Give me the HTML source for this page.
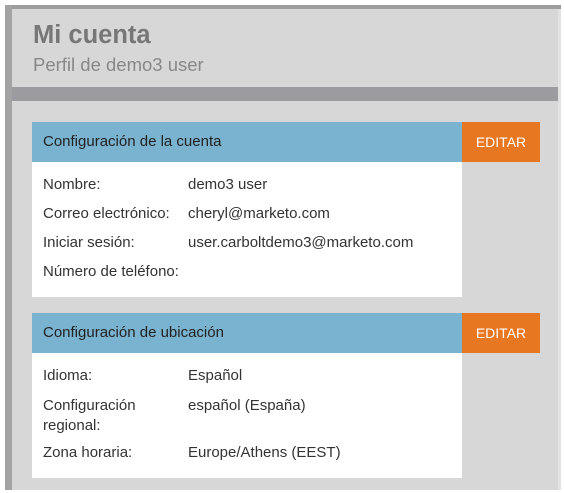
<!DOCTYPE html>
<html><head><meta charset="utf-8"><style>
*{margin:0;padding:0;box-sizing:border-box}
body{width:564px;height:493px;background:#fff;font-family:"Liberation Sans",sans-serif;position:relative;overflow:hidden}
.a{position:absolute}
.lbl,.val{position:absolute;font-size:15px;color:#333;line-height:18px}
.hd{position:absolute;left:32px;width:430px;height:40px;background:#7ab3cf;color:#222;font-size:15px;line-height:40px;padding-left:11px}
.ed{position:absolute;left:462px;width:78px;height:40px;background:#e87722;color:#fff;font-size:14px;line-height:40px;text-align:center}
.wb{position:absolute;left:32px;width:430px;background:#fff}
</style></head><body>
<div class="a" style="left:5px;top:5px;width:556px;height:485px;background:#d7d7d7"></div>
<div class="a" style="left:5px;top:5px;width:556px;height:4px;background:#9d9d9d"></div>
<div class="a" style="left:5px;top:5px;width:7px;height:485px;background:#a3a3a3"></div>
<div class="a" style="left:12px;top:87px;width:549px;height:14px;background:#9c9ba0"></div>
<div class="a" style="left:558px;top:9px;width:3px;height:481px;background:#e2e2e2"></div>
<div class="a" style="left:33px;top:21px;font-size:25.5px;font-weight:bold;color:#777">Mi cuenta</div>
<div class="a" style="left:33px;top:54px;font-size:18.5px;color:#888">Perfil de demo3 user</div>

<div class="hd" style="top:122px">Configuración de la cuenta</div>
<div class="ed" style="top:122px">EDITAR</div>
<div class="wb" style="top:162px;height:135px"></div>
<div class="lbl" style="left:43px;top:176px">Nombre:</div><div class="val" style="left:188px;top:176px">demo3 user</div>
<div class="lbl" style="left:43px;top:205px">Correo electrónico:</div><div class="val" style="left:188px;top:205px">cheryl@marketo.com</div>
<div class="lbl" style="left:43px;top:234px">Iniciar sesión:</div><div class="val" style="left:188px;top:234px">user.carboltdemo3@marketo.com</div>
<div class="lbl" style="left:43px;top:263px">Número de teléfono:</div>

<div class="hd" style="top:313px">Configuración de ubicación</div>
<div class="ed" style="top:313px">EDITAR</div>
<div class="wb" style="top:353px;height:125px"></div>
<div class="lbl" style="left:43px;top:367px">Idioma:</div><div class="val" style="left:188px;top:367px">Español</div>
<div class="lbl" style="left:43px;top:396px;line-height:20px">Configuración<br>regional:</div><div class="val" style="left:188px;top:397px">español (España)</div>
<div class="lbl" style="left:43px;top:444px">Zona horaria:</div><div class="val" style="left:188px;top:444px">Europe/Athens (EEST)</div>
</body></html>
